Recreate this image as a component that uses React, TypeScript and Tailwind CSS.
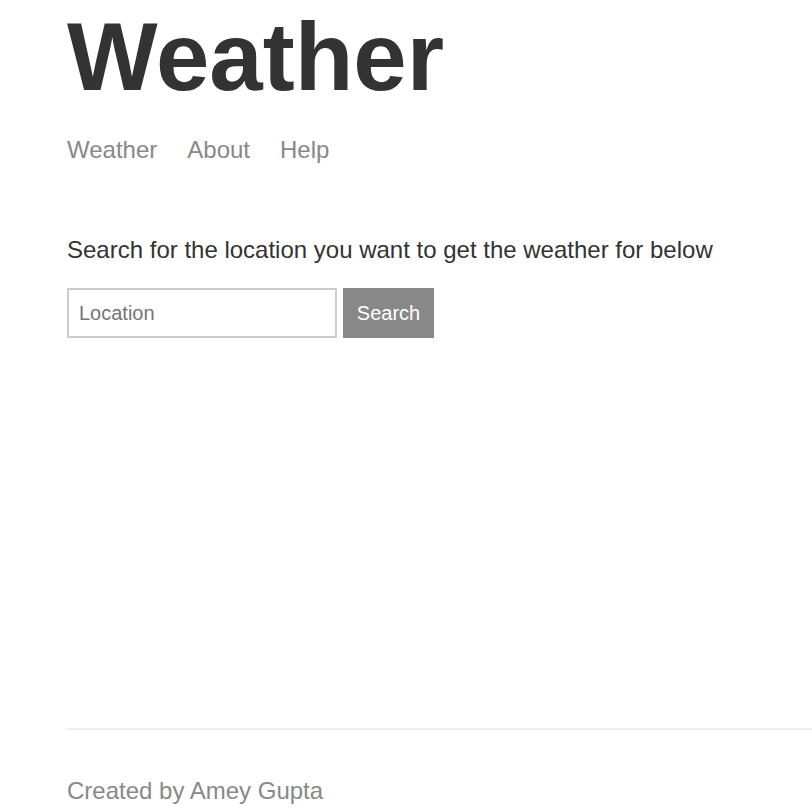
export default function App() {
  return (
    <div className="flex min-h-screen w-full flex-col pl-[67px] font-['Liberation_Sans',Arial,sans-serif] text-[24px] text-[#333333]">
      {/* Header */}
      <header>
        <h1 className="mt-[2px] text-[96px] leading-[110px] font-bold text-[#333333]">
          Weather
        </h1>
        <nav className="mt-[24px] flex gap-[30px] leading-[27.6px] text-[#888888]">
          <a href="#">Weather</a>
          <a href="#">About</a>
          <a href="#">Help</a>
        </nav>
      </header>

      {/* Main */}
      <main className="grow">
        <p className="mt-[72px] leading-[27.6px]">
          Search for the location you want to get the weather for below
        </p>
        <form
          className="mt-[25px] flex gap-[6px]"
          onSubmit={(e) => e.preventDefault()}
        >
          <input
            type="text"
            placeholder="Location"
            className="h-[50px] w-[270px] border-2 border-[#cccccc] bg-white px-[10px] text-[20px] text-[#333333] outline-none placeholder:text-[#757575]"
          />
          <button
            type="submit"
            className="h-[50px] w-[91px] bg-[#888888] text-[20px] text-white"
          >
            Search
          </button>
        </form>
      </main>

      {/* Footer */}
      <footer className="border-t-2 border-[#eeeeee] pt-[47px] pb-[7px] leading-[27.6px] text-[#888888]">
        <p>Created by Amey Gupta</p>
      </footer>
    </div>
  );
}
